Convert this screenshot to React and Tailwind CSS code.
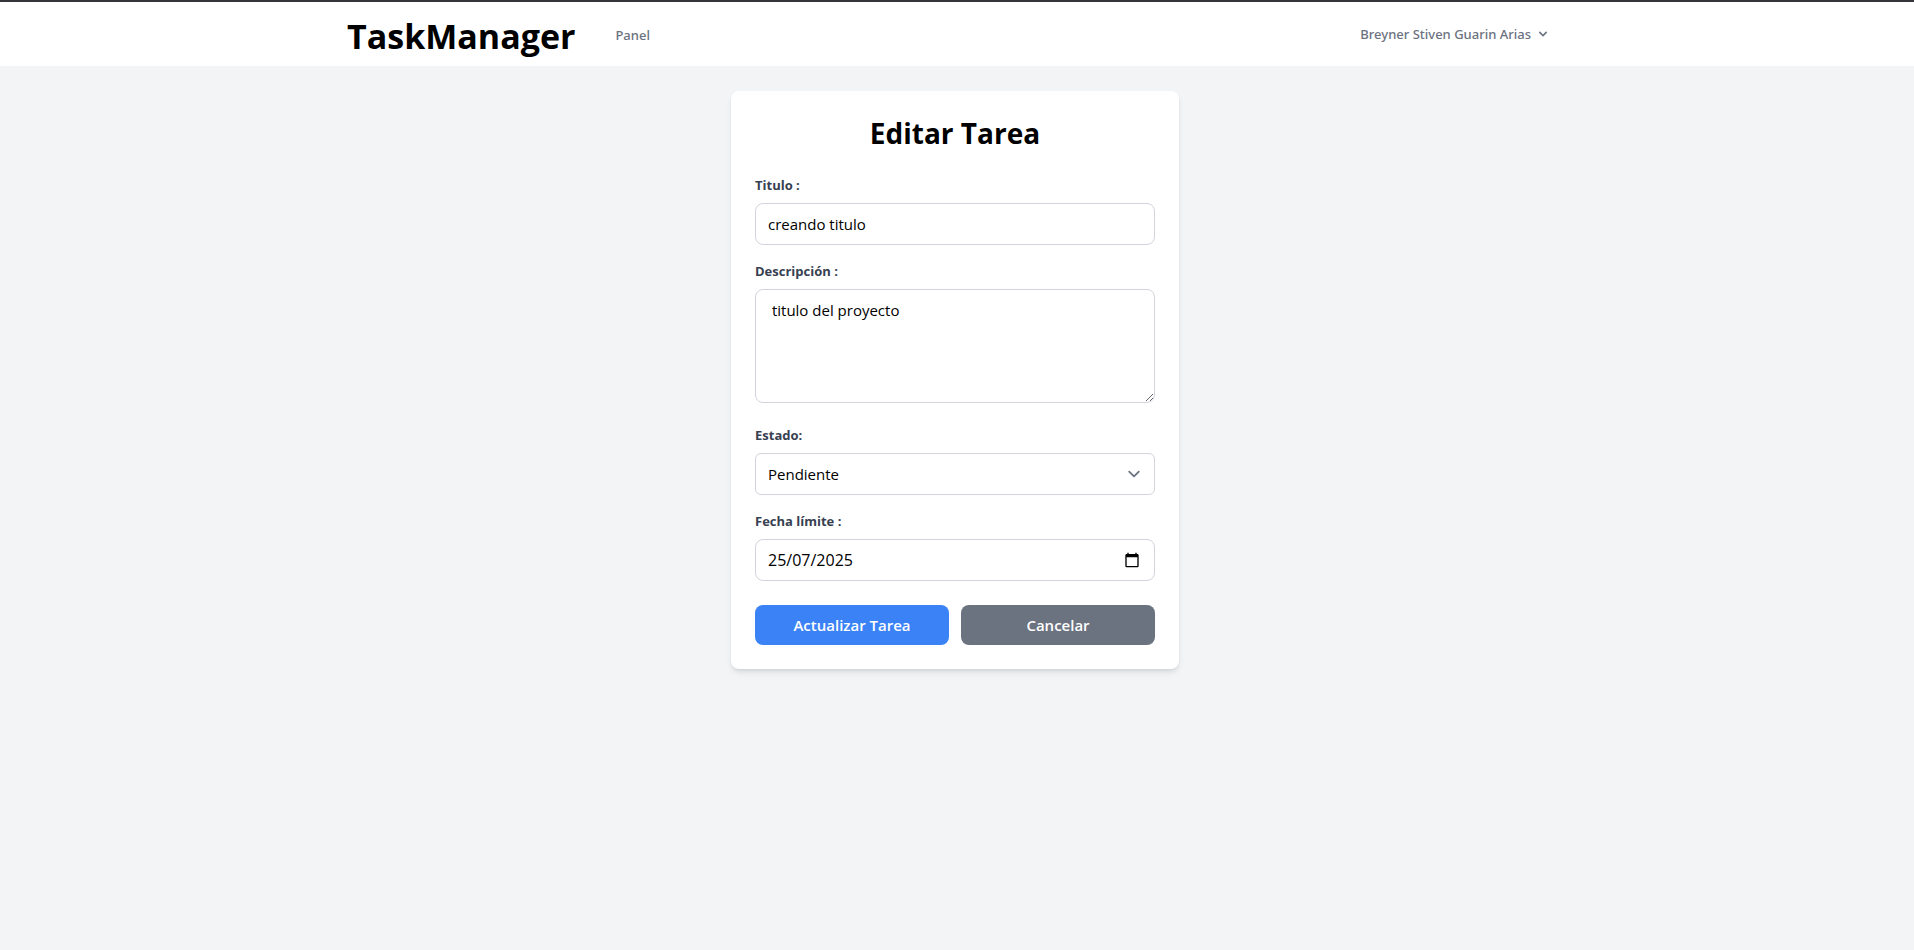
import { useState } from "react";

const labelClass = "mb-2 block text-[13px] leading-5 font-bold text-[#374151]";
const fieldClass =
  "block w-full rounded-lg border border-[#d1d5db] bg-white px-3 py-2 text-[15px] leading-6 text-black outline-none focus:border-blue-500";

function NavBar() {
  return (
    <nav className="border-b border-[#f3f4f6] bg-white pr-1">
      <div className="mx-auto flex h-16 max-w-7xl items-center justify-between px-8">
        <div className="flex items-center gap-10">
          <a href="#inicio" className="pt-1 text-[34px] leading-10 font-bold text-black">
            TaskManager
          </a>
          <a
            href="#panel"
            className="pt-px font-['Noto_Sans',sans-serif] text-[13px] leading-5 font-medium text-[#6b7280]"
          >
            Panel
          </a>
        </div>
        <button
          type="button"
          className="flex items-center gap-1 px-3 font-['Noto_Sans',sans-serif] text-[13px] leading-4 font-medium text-[#6b7280]"
        >
          Breyner Stiven Guarin Arias
          <svg className="h-4 w-4" viewBox="0 0 20 20" fill="currentColor" aria-hidden="true">
            <path
              fillRule="evenodd"
              clipRule="evenodd"
              d="M5.293 7.293a1 1 0 011.414 0L10 10.586l3.293-3.293a1 1 0 111.414 1.414l-4 4a1 1 0 01-1.414 0l-4-4a1 1 0 010-1.414z"
            />
          </svg>
        </button>
      </div>
    </nav>
  );
}

function TaskForm() {
  const [title, setTitle] = useState("creando titulo");
  const [description, setDescription] = useState(" titulo del proyecto");
  const [status, setStatus] = useState("pendiente");
  const [dueDate, setDueDate] = useState("25/07/2025");

  return (
    <form
      className="w-full max-w-md rounded-lg bg-white p-6 shadow-md"
      onSubmit={(event) => event.preventDefault()}
    >
      <h1 className="mb-6 text-center text-[28px] leading-9 font-bold text-black">
        Editar Tarea
      </h1>

      <div className="mb-4">
        <label htmlFor="titulo" className={labelClass}>Titulo :</label>
        <input
          id="titulo"
          type="text"
          className={fieldClass}
          value={title}
          onChange={(event) => setTitle(event.target.value)}
        />
      </div>

      <div className="mb-[22px]">
        <label htmlFor="descripcion" className={labelClass}>Descripción :</label>
        <textarea
          id="descripcion"
          rows={4}
          className={fieldClass}
          value={description}
          onChange={(event) => setDescription(event.target.value)}
        />
      </div>

      <div className="mb-4">
        <label htmlFor="estado" className={labelClass}>Estado:</label>
        <div className="relative">
          <select
            id="estado"
            className="block w-full appearance-none rounded-md border border-[#d1d5db] bg-white py-2 pr-10 pl-3 text-[15px] leading-6 text-black outline-none focus:border-blue-500"
            value={status}
            onChange={(event) => setStatus(event.target.value)}
          >
            <option value="pendiente">Pendiente</option>
            <option value="en-progreso">En progreso</option>
            <option value="completada">Completada</option>
          </select>
          <svg
            className="pointer-events-none absolute inset-y-0 right-[9px] my-auto h-6 w-6 text-[#6b7280]"
            viewBox="0 0 20 20"
            fill="none"
            aria-hidden="true"
          >
            <path
              stroke="currentColor"
              strokeLinecap="round"
              strokeLinejoin="round"
              strokeWidth="1.5"
              d="M6 8l4 4 4-4"
            />
          </svg>
        </div>
      </div>

      <div className="mb-6">
        <label htmlFor="fecha" className={labelClass}>Fecha límite :</label>
        <div className="relative">
          <input
            id="fecha"
            type="text"
            inputMode="numeric"
            className="block w-full rounded-lg border border-[#d1d5db] bg-white px-3 py-2 text-[16px] leading-6 text-black outline-none focus:border-blue-500"
            value={dueDate}
            onChange={(event) => setDueDate(event.target.value)}
          />
          <button
            type="button"
            aria-label="Abrir calendario"
            className="absolute inset-y-0 right-[15px] flex items-center text-black"
          >
            <svg className="h-4 w-4" viewBox="0 0 24 24" fill="currentColor" aria-hidden="true">
              <path d="M20 3h-1V1h-2v2H7V1H5v2H4c-1.100 0-2 .9-2 2v16c0 1.100.9 2 2 2h16c1.100 0 2-.9 2-2V5c0-1.100-.9-2-2-2zm0 18H4V8h16v13z" />
            </svg>
          </button>
        </div>
      </div>

      <div className="grid grid-cols-2 gap-3">
        <button
          type="submit"
          className="rounded-lg bg-[#3b82f6] px-4 py-2 text-[15px] leading-6 font-semibold text-white"
        >
          Actualizar Tarea
        </button>
        <button
          type="button"
          className="rounded-lg bg-[#6b7280] px-4 py-2 text-[15px] leading-6 font-semibold text-white"
        >
          Cancelar
        </button>
      </div>
    </form>
  );
}

export default function App() {
  return (
    <div className="min-h-screen border-t-2 border-[#35343a] bg-[#f3f4f6] font-['Open_Sans','Noto_Sans',sans-serif]">
      <NavBar />
      <main className="flex justify-center py-6 pr-5 pl-4">
        <TaskForm />
      </main>
    </div>
  );
}
